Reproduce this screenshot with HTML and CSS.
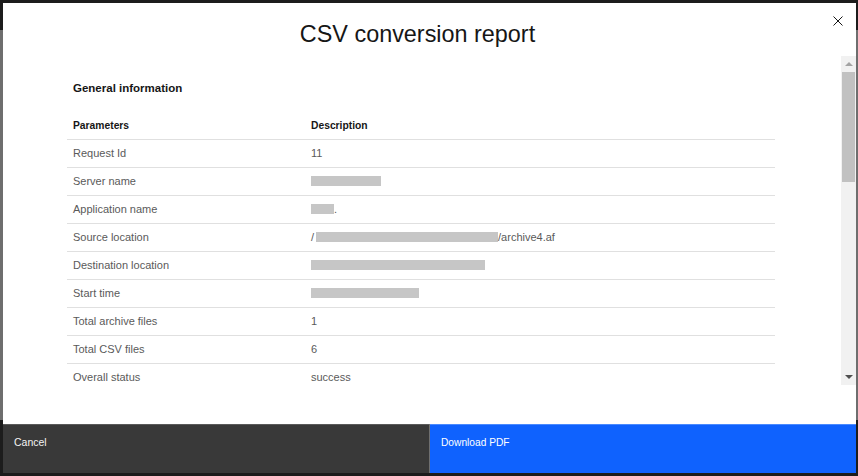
FILE: index.html
```html
<!DOCTYPE html>
<html lang="en">
<head>
<meta charset="utf-8">
<title>CSV conversion report</title>
<link rel="stylesheet" href="styles.css">
</head>
<body>
<div class="modal" role="dialog" aria-label="CSV conversion report">
  <header class="modal-header">
    <h1 class="modal-title">CSV conversion report</h1>
    <button class="close-btn" aria-label="Close">
      <svg width="16" height="16" viewBox="0 0 16 16" aria-hidden="true"><path d="M3.5 3.5 L12.5 12.5 M12.5 3.5 L3.5 12.5" stroke="#161616" stroke-width="1" fill="none"/></svg>
    </button>
  </header>
  <div class="modal-body-wrap">
    <div class="modal-body">
      <section class="section">
        <h2 class="section-title">General information</h2>
        <table class="report-table">
          <thead>
            <tr><th class="col-param">Parameters</th><th>Description</th></tr>
          </thead>
          <tbody>
            <tr><td>Request Id</td><td>11</td></tr>
            <tr><td>Server name</td><td><span class="redact w70"></span></td></tr>
            <tr><td>Application name</td><td><span class="redact w23"></span>.</td></tr>
            <tr><td>Source location</td><td>/<span class="redact w182 gap-l"></span>/archive4.af</td></tr>
            <tr><td>Destination location</td><td><span class="redact w174"></span></td></tr>
            <tr><td>Start time</td><td><span class="redact w108"></span></td></tr>
            <tr><td>Total archive files</td><td>1</td></tr>
            <tr><td>Total CSV files</td><td>6</td></tr>
            <tr><td>Overall status</td><td>success</td></tr>
          </tbody>
        </table>
      </section>
    </div>
    <div class="scrollbar" aria-hidden="true">
      <div class="sb-btn"><span class="arrow-up"></span></div>
      <div class="sb-track">
        <div class="sb-thumb"></div>
      </div>
      <div class="sb-btn"><span class="arrow-down"></span></div>
    </div>
  </div>
  <footer class="modal-footer">
    <button class="btn btn-secondary">Cancel</button>
    <button class="btn btn-primary">Download PDF</button>
  </footer>
</div>
</body>
</html>
```
FILE: styles.css
```css
* { box-sizing: border-box; }

html, body { height: 100%; }

body {
  margin: 0;
  padding: 3px 2px 3px 3px;
  background: linear-gradient(#1c1c1c 0 30px, #6e6e6e 30px 420px, #1c1c1c 420px);
  font-family: "Liberation Sans", Arial, sans-serif;
  color: #161616;
}

.modal {
  height: 470px;
  background: #ffffff;
  display: flex;
  flex-direction: column;
}

.modal-header {
  position: relative;
  height: 53px;
  flex: none;
  padding-right: 24px;
  display: flex;
  justify-content: center;
}

.modal-title {
  margin: 0;
  padding-top: 16px;
  font-size: 23.4px;
  line-height: 30px;
  font-weight: 400;
  color: #161616;
}

.close-btn {
  position: absolute;
  top: 10px;
  right: 10px;
  width: 16px;
  height: 16px;
  padding: 0;
  border: 0;
  background: transparent;
  display: flex;
}

.modal-body-wrap {
  flex: 1;
  min-height: 0;
  padding-bottom: 39px;
  display: flex;
}

.modal-body {
  flex: 1;
  overflow: hidden;
  padding: 0 66px 0 64px;
}

.section-title {
  margin: 0;
  padding: 23px 0 0 6px;
  font-size: 11.5px;
  line-height: 18px;
  font-weight: 700;
  color: #161616;
}

.report-table {
  width: 100%;
  margin-top: 14px;
  border-collapse: collapse;
  font-size: 11px;
}

.report-table th,
.report-table td {
  height: 28px;
  padding: 0 6px;
  text-align: left;
  vertical-align: middle;
  border-bottom: 1px solid #e0e0e0;
  line-height: 14px;
}

.report-table th {
  padding-top: 2px;
  font-size: 10.3px;
  font-weight: 700;
  color: #161616;
}

.report-table td { color: #5a5a5a; }

.col-param { width: 238px; }

.redact {
  display: inline-block;
  height: 10px;
  background: #c6c6c6;
  vertical-align: -1px;
}
.gap-l { margin-left: 2px; }
.w23 { width: 23px; }
.w70 { width: 70px; }
.w108 { width: 108px; }
.w174 { width: 174px; }
.w182 { width: 182px; }

/* scrollbar column */
.scrollbar {
  flex: none;
  width: 15px;
  display: flex;
  flex-direction: column;
  background: #f1f1f1;
}

.sb-btn {
  flex: none;
  height: 16px;
  display: flex;
  align-items: center;
  justify-content: center;
}

.arrow-up {
  width: 0;
  height: 0;
  border-left: 4px solid transparent;
  border-right: 4px solid transparent;
  border-bottom: 4px solid #a3a3a3;
}

.arrow-down {
  width: 0;
  height: 0;
  border-left: 4px solid transparent;
  border-right: 4px solid transparent;
  border-top: 4px solid #505050;
}

.sb-track {
  flex: 1;
  padding: 0 1px;
}

.sb-thumb {
  height: 110px;
  background: #c1c1c1;
}

.modal-footer {
  flex: none;
  height: 49px;
  display: grid;
  grid-template-columns: 1fr 1fr;
  gap: 1px;
  background: #6f6f6f;
}

.btn {
  border: 0;
  margin: 0;
  padding: 10px 11px 0;
  text-align: left;
  display: flex;
  align-items: flex-start;
  font-family: inherit;
  font-size: 10.5px;
  line-height: 14px;
  border-top: 1px solid transparent;
}

.btn-secondary {
  background: #393939;
  color: #f4f4f4;
  border-top-color: #5a5a5a;
}

.btn-primary {
  background: #0f62fe;
  color: #ffffff;
  font-size: 10.2px;
  padding-top: 11px;
  border-top-color: #4a8afe;
}
```
